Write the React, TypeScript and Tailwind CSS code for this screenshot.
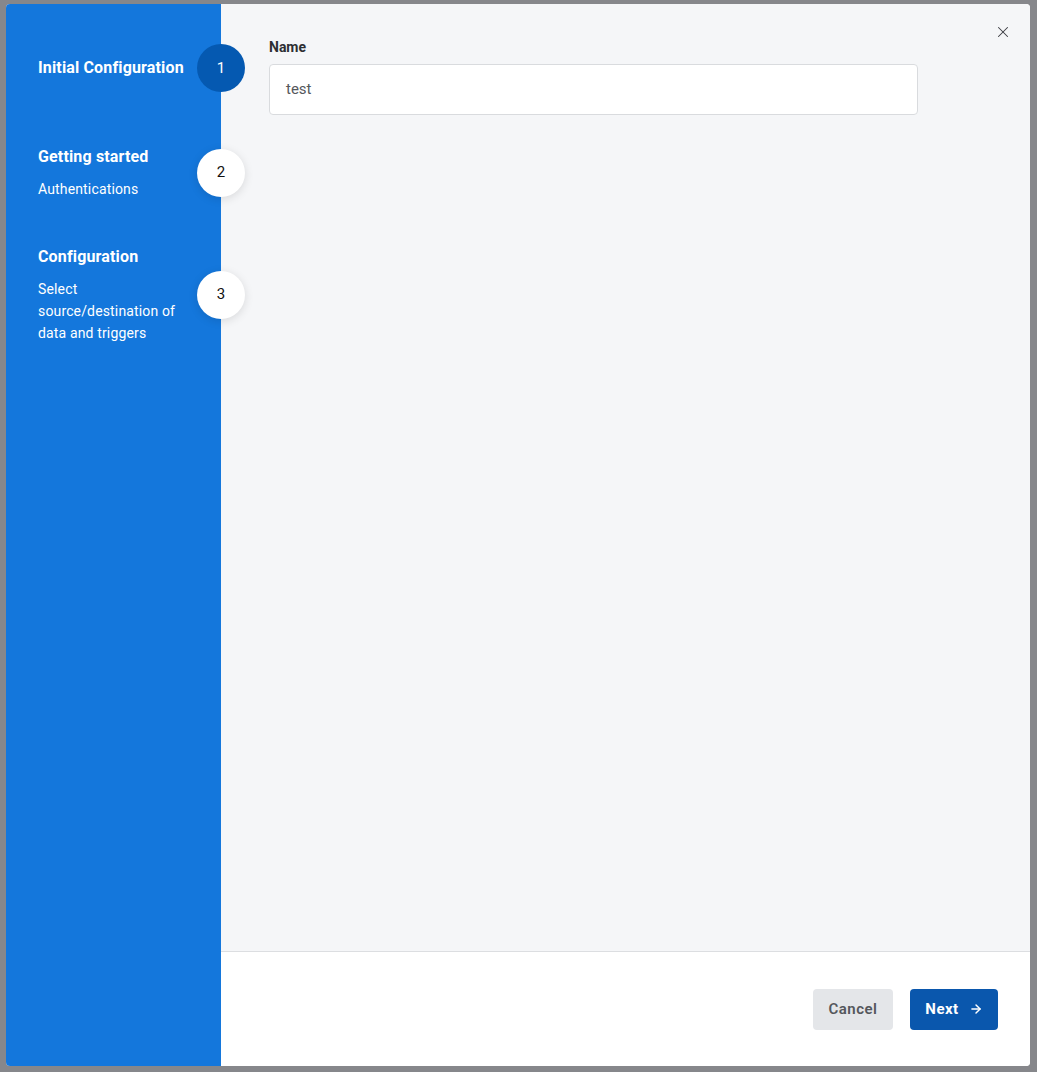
import { ArrowRight, X } from 'lucide-react';

type Step = {
  num: number;
  title: string;
  desc?: string[];
  active?: boolean;
  className: string;
};

const STEPS: Step[] = [
  { num: 1, title: 'Initial Configuration', active: true, className: 'mt-[52px]' },
  { num: 2, title: 'Getting started', desc: ['Authentications'], className: 'mt-[65px]' },
  {
    num: 3,
    title: 'Configuration',
    desc: ['Select', 'source/destination of', 'data and triggers'],
    className: 'mt-[45px]',
  },
];

function StepItem({ step }: { step: Step }) {
  return (
    <div className={`relative pl-[32px] pr-[28px] ${step.className}`}>
      <div className="text-[16px] leading-[24px] font-bold text-white tracking-[0.15px]">{step.title}</div>
      {step.desc && (
        <div className="mt-[9px] text-[14px] leading-[22px] text-white tracking-[0.15px]">
          {step.desc.map((line) => (
            <div key={line}>{line}</div>
          ))}
        </div>
      )}
      {/* step bubble sits over the panel edge */}
      <div
        className={`absolute right-[-24px] top-1/2 -translate-y-1/2 w-[48px] h-[48px] rounded-full flex items-center justify-center text-[15px] z-10 ${
          step.active
            ? 'bg-[#0559b1] text-white'
            : 'bg-white text-[#111] shadow-[0_2px_10px_rgba(0,0,0,0.12)]'
        }`}
      >
        {step.num}
      </div>
    </div>
  );
}

export default function App() {
  return (
    <div
      className="h-[1072px] bg-[#86878b] pt-[4px] pl-[6px] pr-[7px] pb-[6px]"
      style={{ fontFamily: 'Roboto, "Liberation Sans", sans-serif' }}
    >
      <div className="h-full flex rounded-[4px] overflow-hidden bg-white">
        {/* Wizard steps */}
        <aside className="w-[215px] shrink-0 bg-[#1477dc] relative z-10">
          {STEPS.map((s) => (
            <StepItem key={s.num} step={s} />
          ))}
        </aside>

        {/* Main panel */}
        <main className="flex-1 flex flex-col">
          <div className="flex-1 bg-[#f5f6f8] relative pl-[48px] pt-[33px]">
            <button className="absolute right-[18px] top-[19px] text-[#3a3d42]">
              <X size={18} strokeWidth={1.4} />
            </button>
            <label className="block text-[14px] leading-[20px] font-bold text-[#2d2f33]">Name</label>
            <div className="mt-[7px] w-[649px] h-[51px] bg-white border border-[#d9dbde] rounded-[4px] flex items-center px-[16px] text-[15px] text-[#55585c]">
              test
            </div>
          </div>
          <footer className="h-[115px] border-t border-[#dcdee1] bg-white flex items-center justify-end gap-[17px] pr-[32px]">
            <button className="w-[80px] h-[41px] rounded-[4px] bg-[#e4e6e9] text-[#54575c] text-[15px] font-semibold tracking-[0.5px]">
              Cancel
            </button>
            <button className="w-[88px] h-[41px] rounded-[4px] bg-[#0a57ad] text-white text-[15px] font-bold tracking-[0.5px] flex items-center justify-center gap-[10px]">
              Next
              <ArrowRight size={14} strokeWidth={2.5} />
            </button>
          </footer>
        </main>
      </div>
    </div>
  );
}
